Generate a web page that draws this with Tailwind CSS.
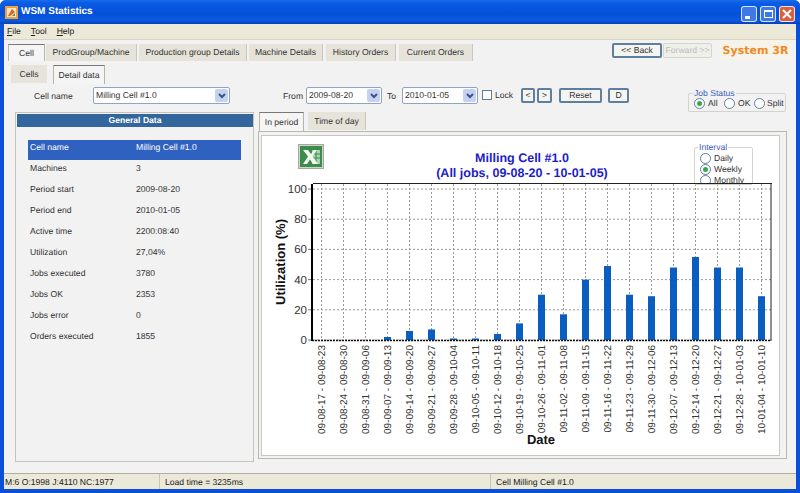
<!DOCTYPE html>
<html lang="en">
<head>
    <meta charset="UTF-8">
    <title>WSM Statistics</title>
    <script src="https://cdn.jsdelivr.net/npm/@tailwindcss/browser@4"></script>
</head>
<body class="bg-white">
<div class="w-[800px] h-[493px] flex flex-col overflow-hidden rounded-t-md bg-[#0a4fd8] text-[8.6px] leading-none text-[#333] [text-rendering:geometricPrecision] font-['Liberation_Sans',Arial,sans-serif]">

    <!-- Title bar -->
    <div class="h-6 shrink-0 flex items-center pl-[5px] pr-[5px] bg-[linear-gradient(180deg,#1a6ee8_0%,#0a5ce6_12%,#0550d8_55%,#0a5ae0_85%,#0440b8_100%)]">
        <svg class="w-[13px] h-[13px]" viewBox="0 0 13 13"><rect width="13" height="13" fill="#f0a040"/><rect x="2" y="2" width="9" height="9" fill="#fbe6c4"/><path d="M3 10 L7 3 L10 6 L5 10Z" fill="#d8641c"/><path d="M7 10 L10 7 L10 10Z" fill="#4a9a4a"/></svg>
        <span class="ml-[3px] text-white text-[10px] font-bold">WSM Statistics</span>
        <div class="ml-auto flex gap-[3px] mt-[3px]">
            <div class="w-[16px] h-[16px] rounded-[3px] border border-white/80 bg-[#3f78e8] flex items-end pl-[3px] pb-[2px]"><div class="w-[5px] h-[3px] bg-white"></div></div>
            <div class="w-[16px] h-[16px] rounded-[3px] border border-white/80 bg-[#3f78e8] flex items-center justify-center"><div class="w-[9px] h-[8px] border border-t-2 border-white"></div></div>
            <div class="w-[16px] h-[16px] rounded-[3px] border border-white/80 bg-[#d9603c] flex items-center justify-center"><svg class="w-[10px] h-[10px]" viewBox="0 0 10 10"><path d="M1 1 L9 9 M9 1 L1 9" stroke="#fff" stroke-width="2"/></svg></div>
        </div>
    </div>

    <!-- Window inner -->
    <div class="flex-1 min-h-0 mx-[4px] mb-[4px] flex flex-col bg-[#f2f2f2]">

        <!-- Menu -->
        <div class="h-[16px] shrink-0 flex items-center gap-[10px] pl-[3px] bg-[#ece9d8] border-b border-[#d8d4c4] text-[#222]">
            <span><u>F</u>ile</span><span><u>T</u>ool</span><span><u>H</u>elp</span>
        </div>

        <!-- Main tabs and navigation -->
        <div class="h-[21px] shrink-0 flex items-start relative">
            <div class="flex pt-[4px] pl-[4px] h-full">
                <div class="w-[37px] h-[17px] flex items-center justify-center bg-[#f5f5f5] border border-b-0 border-[#b5b5a8] border-t-[#777]">Cell</div>
                <div class="ml-[1px] w-[91px] h-[17px] flex items-center justify-center bg-[#e6e4da] border-r border-[#c8c8bc]">ProdGroup/Machine</div>
                <div class="ml-[2px] w-[108px] h-[17px] flex items-center justify-center bg-[#e6e4da] border-r border-[#c8c8bc]">Production group Details</div>
                <div class="ml-[2px] w-[74px] h-[17px] flex items-center justify-center bg-[#e6e4da] border-r border-[#c8c8bc]">Machine Details</div>
                <div class="ml-[3px] w-[70px] h-[17px] flex items-center justify-center bg-[#e6e4da] border-r border-[#c8c8bc]">History Orders</div>
                <div class="ml-[3px] w-[74px] h-[17px] flex items-center justify-center bg-[#e6e4da] border-r border-[#c8c8bc]">Current Orders</div>
            </div>
            <div class="ml-auto flex items-start">
                <div class="mt-[3px] w-[50px] h-[15px] flex items-center justify-center bg-[#f4f4f0] border-2 border-[#5f7f9f] rounded-[2px]">&lt;&lt; Back</div>
                <div class="mt-[3px] ml-[1px] w-[49px] h-[15px] flex items-center justify-center bg-[#f0f0ea] border border-[#d5d5c8] text-[#bbb] rounded-[2px]">Forward &gt;&gt;</div>
                <div class="ml-[7px] mr-[4px] w-[73px] h-[20px] flex items-center justify-center bg-[#f6f3ea] text-[#f08a24] text-[11px] font-bold font-['DejaVu_Sans',sans-serif]">System 3R</div>
            </div>
        </div>

        <!-- Sub tabs -->
        <div class="h-[23px] shrink-0 flex pl-[7px] pt-[4px]">
            <div class="w-[36px] h-[18px] flex items-center justify-center bg-[#e6e4da]">Cells</div>
            <div class="ml-[6px] w-[52px] h-[19px] flex items-center justify-center bg-[#f5f5f5] border border-b-0 border-[#b5b5a8] border-t-[#777]">Detail data</div>
        </div>

        <!-- Filter row -->
        <div class="h-[28px] shrink-0 flex items-start text-[#333] pt-[3px]">
            <span class="ml-[30px] mt-[5px] w-[59px]">Cell name</span>
            <div class="w-[137px] h-[17px] flex items-center justify-between pl-[2px] pr-[1px] bg-white border border-[#8fa4c4] rounded-[2px]">
                <span>Milling Cell #1.0</span>
                <div class="w-[13px] h-[13px] flex items-center justify-center bg-[#c4d2f0] rounded-[2px]"><svg class="w-[8px] h-[6px]" viewBox="0 0 8 6"><path d="M1 1 L4 4 L7 1" fill="none" stroke="#35558c" stroke-width="2"/></svg></div>
            </div>
            <span class="ml-[53px] mt-[5px] w-[23px]">From</span>
            <div class="w-[76px] h-[17px] flex items-center justify-between pl-[2px] pr-[1px] bg-white border border-[#8fa4c4] rounded-[2px]">
                <span>2009-08-20</span>
                <div class="w-[13px] h-[13px] flex items-center justify-center bg-[#c4d2f0] rounded-[2px]"><svg class="w-[8px] h-[6px]" viewBox="0 0 8 6"><path d="M1 1 L4 4 L7 1" fill="none" stroke="#35558c" stroke-width="2"/></svg></div>
            </div>
            <span class="ml-[5px] mt-[5px] w-[15px]">To</span>
            <div class="w-[76px] h-[17px] flex items-center justify-between pl-[2px] pr-[1px] bg-white border border-[#8fa4c4] rounded-[2px]">
                <span>2010-01-05</span>
                <div class="w-[13px] h-[13px] flex items-center justify-center bg-[#c4d2f0] rounded-[2px]"><svg class="w-[8px] h-[6px]" viewBox="0 0 8 6"><path d="M1 1 L4 4 L7 1" fill="none" stroke="#35558c" stroke-width="2"/></svg></div>
            </div>
            <div class="ml-[4px] mt-[3px] w-[10px] h-[10px] border border-[#5f7f9f] bg-white"></div>
            <span class="ml-[3px] mt-[4px] w-[26px]">Lock</span>
            <div class="mt-[1px] w-[14px] h-[15px] flex items-center justify-center border-2 border-[#5f7f9f] rounded-[2px] bg-[#f4f4f0]">&lt;</div>
            <div class="mt-[1px] ml-[2px] w-[15px] h-[15px] flex items-center justify-center border-2 border-[#5f7f9f] rounded-[2px] bg-[#f4f4f0]">&gt;</div>
            <div class="mt-[1px] ml-[7px] w-[43px] h-[15px] flex items-center justify-center border-2 border-[#5f7f9f] rounded-[2px] bg-[#f4f4f0]">Reset</div>
            <div class="mt-[1px] ml-[6px] w-[21px] h-[15px] flex items-center justify-center border-2 border-[#5f7f9f] rounded-[2px] bg-[#f4f4f0]">D</div>
            <div class="relative ml-[59px] mt-[6px] w-[98px] h-[19px] border border-[#d4d4cc] rounded-[2px] flex items-center pl-[5px] pt-[2px]">
                <span class="absolute -top-[5px] left-[4px] px-[1px] bg-[#f2f2f2] text-[#3a5cc0]">Job Status</span>
                <div class="w-[11px] h-[11px] rounded-full border border-[#5f7f9f] bg-white flex items-center justify-center"><div class="w-[5px] h-[5px] rounded-full bg-[#3aa84a]"></div></div>
                <span class="ml-[3px] w-[16px]">All</span>
                <div class="w-[11px] h-[11px] rounded-full border border-[#5f7f9f] bg-white"></div>
                <span class="ml-[3px] w-[16px]">OK</span>
                <div class="w-[11px] h-[11px] rounded-full border border-[#5f7f9f] bg-white"></div>
                <span class="ml-[2px]">Split</span>
            </div>
        </div>

        <!-- Panels -->
        <div class="flex-1 min-h-0 flex items-start pl-[11px]">
            <!-- General data -->
            <div class="w-[239px] h-[350px] border border-[#c4c4bc] pt-[1px]">
                <div class="ml-[1px] h-[13px] flex items-center justify-center bg-[#33669c] text-white font-bold">General Data</div>
                <div class="pt-[13px] pl-[12px] pr-[12px]">
                    <div class="h-[20px] flex items-center pb-[6px] pl-[2px] bg-[#2f62c0] text-white"><span class="w-[106px]">Cell name</span><span>Milling Cell #1.0</span></div>
                    <div class="-mt-[2px] h-[21px] flex items-center pl-[2px]"><span class="w-[106px]">Machines</span><span>3</span></div>
                    <div class="h-[21px] flex items-center pl-[2px]"><span class="w-[106px]">Period start</span><span>2009-08-20</span></div>
                    <div class="h-[21px] flex items-center pl-[2px]"><span class="w-[106px]">Period end</span><span>2010-01-05</span></div>
                    <div class="h-[21px] flex items-center pl-[2px]"><span class="w-[106px]">Active time</span><span>2200:08:40</span></div>
                    <div class="h-[21px] flex items-center pl-[2px]"><span class="w-[106px]">Utilization</span><span>27,04%</span></div>
                    <div class="h-[21px] flex items-center pl-[2px]"><span class="w-[106px]">Jobs executed</span><span>3780</span></div>
                    <div class="h-[21px] flex items-center pl-[2px]"><span class="w-[106px]">Jobs OK</span><span>2353</span></div>
                    <div class="h-[21px] flex items-center pl-[2px]"><span class="w-[106px]">Jobs error</span><span>0</span></div>
                    <div class="h-[21px] flex items-center pl-[2px]"><span class="w-[106px]">Orders executed</span><span>1855</span></div>
                </div>
            </div>

            <!-- Chart tabs -->
            <div class="ml-[4px] w-[529px] flex flex-col">
                <div class="h-[19px] flex pl-[1px]">
                    <div class="w-[45px] h-[19px] flex items-center justify-center bg-[#f5f5f5] border border-b-0 border-[#b5b5a8] border-t-[#777]">In period</div>
                    <div class="ml-[4px] w-[58px] h-[18px] flex items-center justify-center bg-[#e6e4da] border-r border-[#c8c8bc]">Time of day</div>
                </div>
                <div class="h-[328px] border border-[#b8b8ac] p-[3px] pl-[2px]">
                    <div class="relative w-[519px] h-[321px] bg-white border border-[#c8c8c0]">
                        <!-- Excel export -->
                        <div class="absolute left-[36px] top-[8px] w-[26px] h-[25px] bg-[#cfd4cc] border border-[#a8a8a0] flex items-center justify-center">
                            <svg class="w-[22px] h-[21px]" viewBox="0 0 22 21"><rect width="22" height="21" fill="#3c8c4c"/><path d="M12 4 H20 V18 H12Z" fill="#a8d4b0"/><path d="M12 8 H20 M12 12 H20 M16 4 V18" stroke="#3c8c4c"/><path d="M3 4 H8 L11 8 L14 4 H17 L12.5 10.5 L18 18 H13 L10 13.5 L7 18 H3 L8 10.5Z" fill="#f0f8f0"/></svg>
                        </div>
                        <svg id="chart" class="absolute left-0 top-0" width="519" height="321" viewBox="261 136 519 321"></svg>
                        <!-- Interval -->
                        <div class="absolute left-[432px] top-[11px] w-[59px] h-[38px] border border-[#d4d4cc] rounded-[2px] bg-white pl-[5px] pt-[5px] overflow-hidden">
                            <div class="h-[11px] flex items-center"><div class="w-[11px] h-[11px] rounded-full border border-[#5f7f9f] bg-white"></div><span class="ml-[3px]">Daily</span></div>
                            <div class="h-[11px] flex items-center"><div class="w-[11px] h-[11px] rounded-full border border-[#5f7f9f] bg-white flex items-center justify-center"><div class="w-[5px] h-[5px] rounded-full bg-[#3aa84a]"></div></div><span class="ml-[3px]">Weekly</span></div>
                            <div class="h-[11px] flex items-center"><div class="w-[11px] h-[11px] rounded-full border border-[#5f7f9f] bg-white"></div><span class="ml-[3px]">Monthly</span></div>
                        </div>
                        <span class="absolute left-[436px] top-[7px] px-[1px] bg-white text-[#3a5cc0]">Interval</span>
                        <div class="absolute left-[51px] top-[47px] w-[459px] h-[1px] bg-[#222]"></div>
                    </div>
                </div>
            </div>
        </div>

        <!-- Status bar -->
        <div class="h-[16px] shrink-0 flex items-center bg-[#ece9d8] border-t border-[#b0ae9c] text-[#222]">
            <span class="w-[155px] pl-[1px] pt-[2px]">M:6 O:1998 J:4110 NC:1977</span>
            <span class="w-[331px] pl-[5px] pt-[2px] h-full flex items-center border-l border-[#c8c6b4]">Load time = 3235ms</span>
            <span class="pl-[5px] pt-[2px] h-full flex items-center border-l border-[#c8c6b4]">Cell Milling Cell #1.0</span>
        </div>
    </div>
</div>

<script>
    // Weekly utilization, one entry per bar
    const weeks = [
        ['09-08-17 - 09-08-23', 0], ['09-08-24 - 09-08-30', 0], ['09-08-31 - 09-09-06', 0],
        ['09-09-07 - 09-09-13', 2], ['09-09-14 - 09-09-20', 6], ['09-09-21 - 09-09-27', 7],
        ['09-09-28 - 09-10-04', 1], ['09-10-05 - 09-10-11', 1], ['09-10-12 - 09-10-18', 4],
        ['09-10-19 - 09-10-25', 11], ['09-10-26 - 09-11-01', 30], ['09-11-02 - 09-11-08', 17],
        ['09-11-09 - 09-11-15', 40], ['09-11-16 - 09-11-22', 49], ['09-11-23 - 09-11-29', 30],
        ['09-11-30 - 09-12-06', 29], ['09-12-07 - 09-12-13', 48], ['09-12-14 - 09-12-20', 55],
        ['09-12-21 - 09-12-27', 48], ['09-12-28 - 10-01-03', 48], ['10-01-04 - 10-01-10', 29]
    ];
    const font = 'Liberation Sans, Arial, sans-serif';
    const yOf = v => 340 - v * 1.51;
    let s = '';
    s += `<text x="521" y="162" text-anchor="middle" font-family="${font}" font-size="12.5" font-weight="bold" fill="#1c1cc8">Milling Cell #1.0</text>`;
    s += `<text x="521" y="177" text-anchor="middle" font-family="${font}" font-size="12.5" font-weight="bold" fill="#1c1cc8">(All jobs, 09-08-20 - 10-01-05)</text>`;
    for (let v = 0; v <= 100; v += 20) {
        const y = yOf(v);
        s += `<line x1="312" x2="770" y1="${y}" y2="${y}" stroke="#999" stroke-dasharray="2 2"/>`;
        s += `<line x1="307" x2="312" y1="${y}" y2="${y}" stroke="#777"/>`;
        s += `<text x="306" y="${y + 4}" text-anchor="end" font-family="${font}" font-size="11.5" fill="#333">${v}</text>`;
    }
    weeks.forEach(([label, v], i) => {
        const x = 320.5 + i * 22;
        s += `<line x1="${x}" x2="${x}" y1="184" y2="340" stroke="#999" stroke-dasharray="2 2"/>`;
        if (v > 0) s += `<rect x="${x - 3.5}" y="${yOf(v)}" width="7" height="${v * 1.51}" fill="#0a5ec0"/>`;
        s += `<text transform="translate(${x + 3.5},345) rotate(-90)" text-anchor="end" font-family="${font}" font-size="10" fill="#333">${label}</text>`;
    });
    s += `<line x1="311" x2="311" y1="184" y2="341" stroke="#000" stroke-width="2"/>`;
    s += `<line x1="770" x2="770" y1="184" y2="341" stroke="#222"/>`;
    s += `<line x1="311" x2="770" y1="340.5" y2="340.5" stroke="#111" stroke-width="1.5" stroke-dasharray="2 1"/>`;
    s += `<text transform="translate(284,262) rotate(-90)" text-anchor="middle" font-family="${font}" font-size="13" font-weight="bold" fill="#111">Utilization (%)</text>`;
    s += `<text x="540" y="444" text-anchor="middle" font-family="${font}" font-size="13" font-weight="bold" fill="#111">Date</text>`;
    document.getElementById('chart').innerHTML = s;
</script>
</body>
</html>
